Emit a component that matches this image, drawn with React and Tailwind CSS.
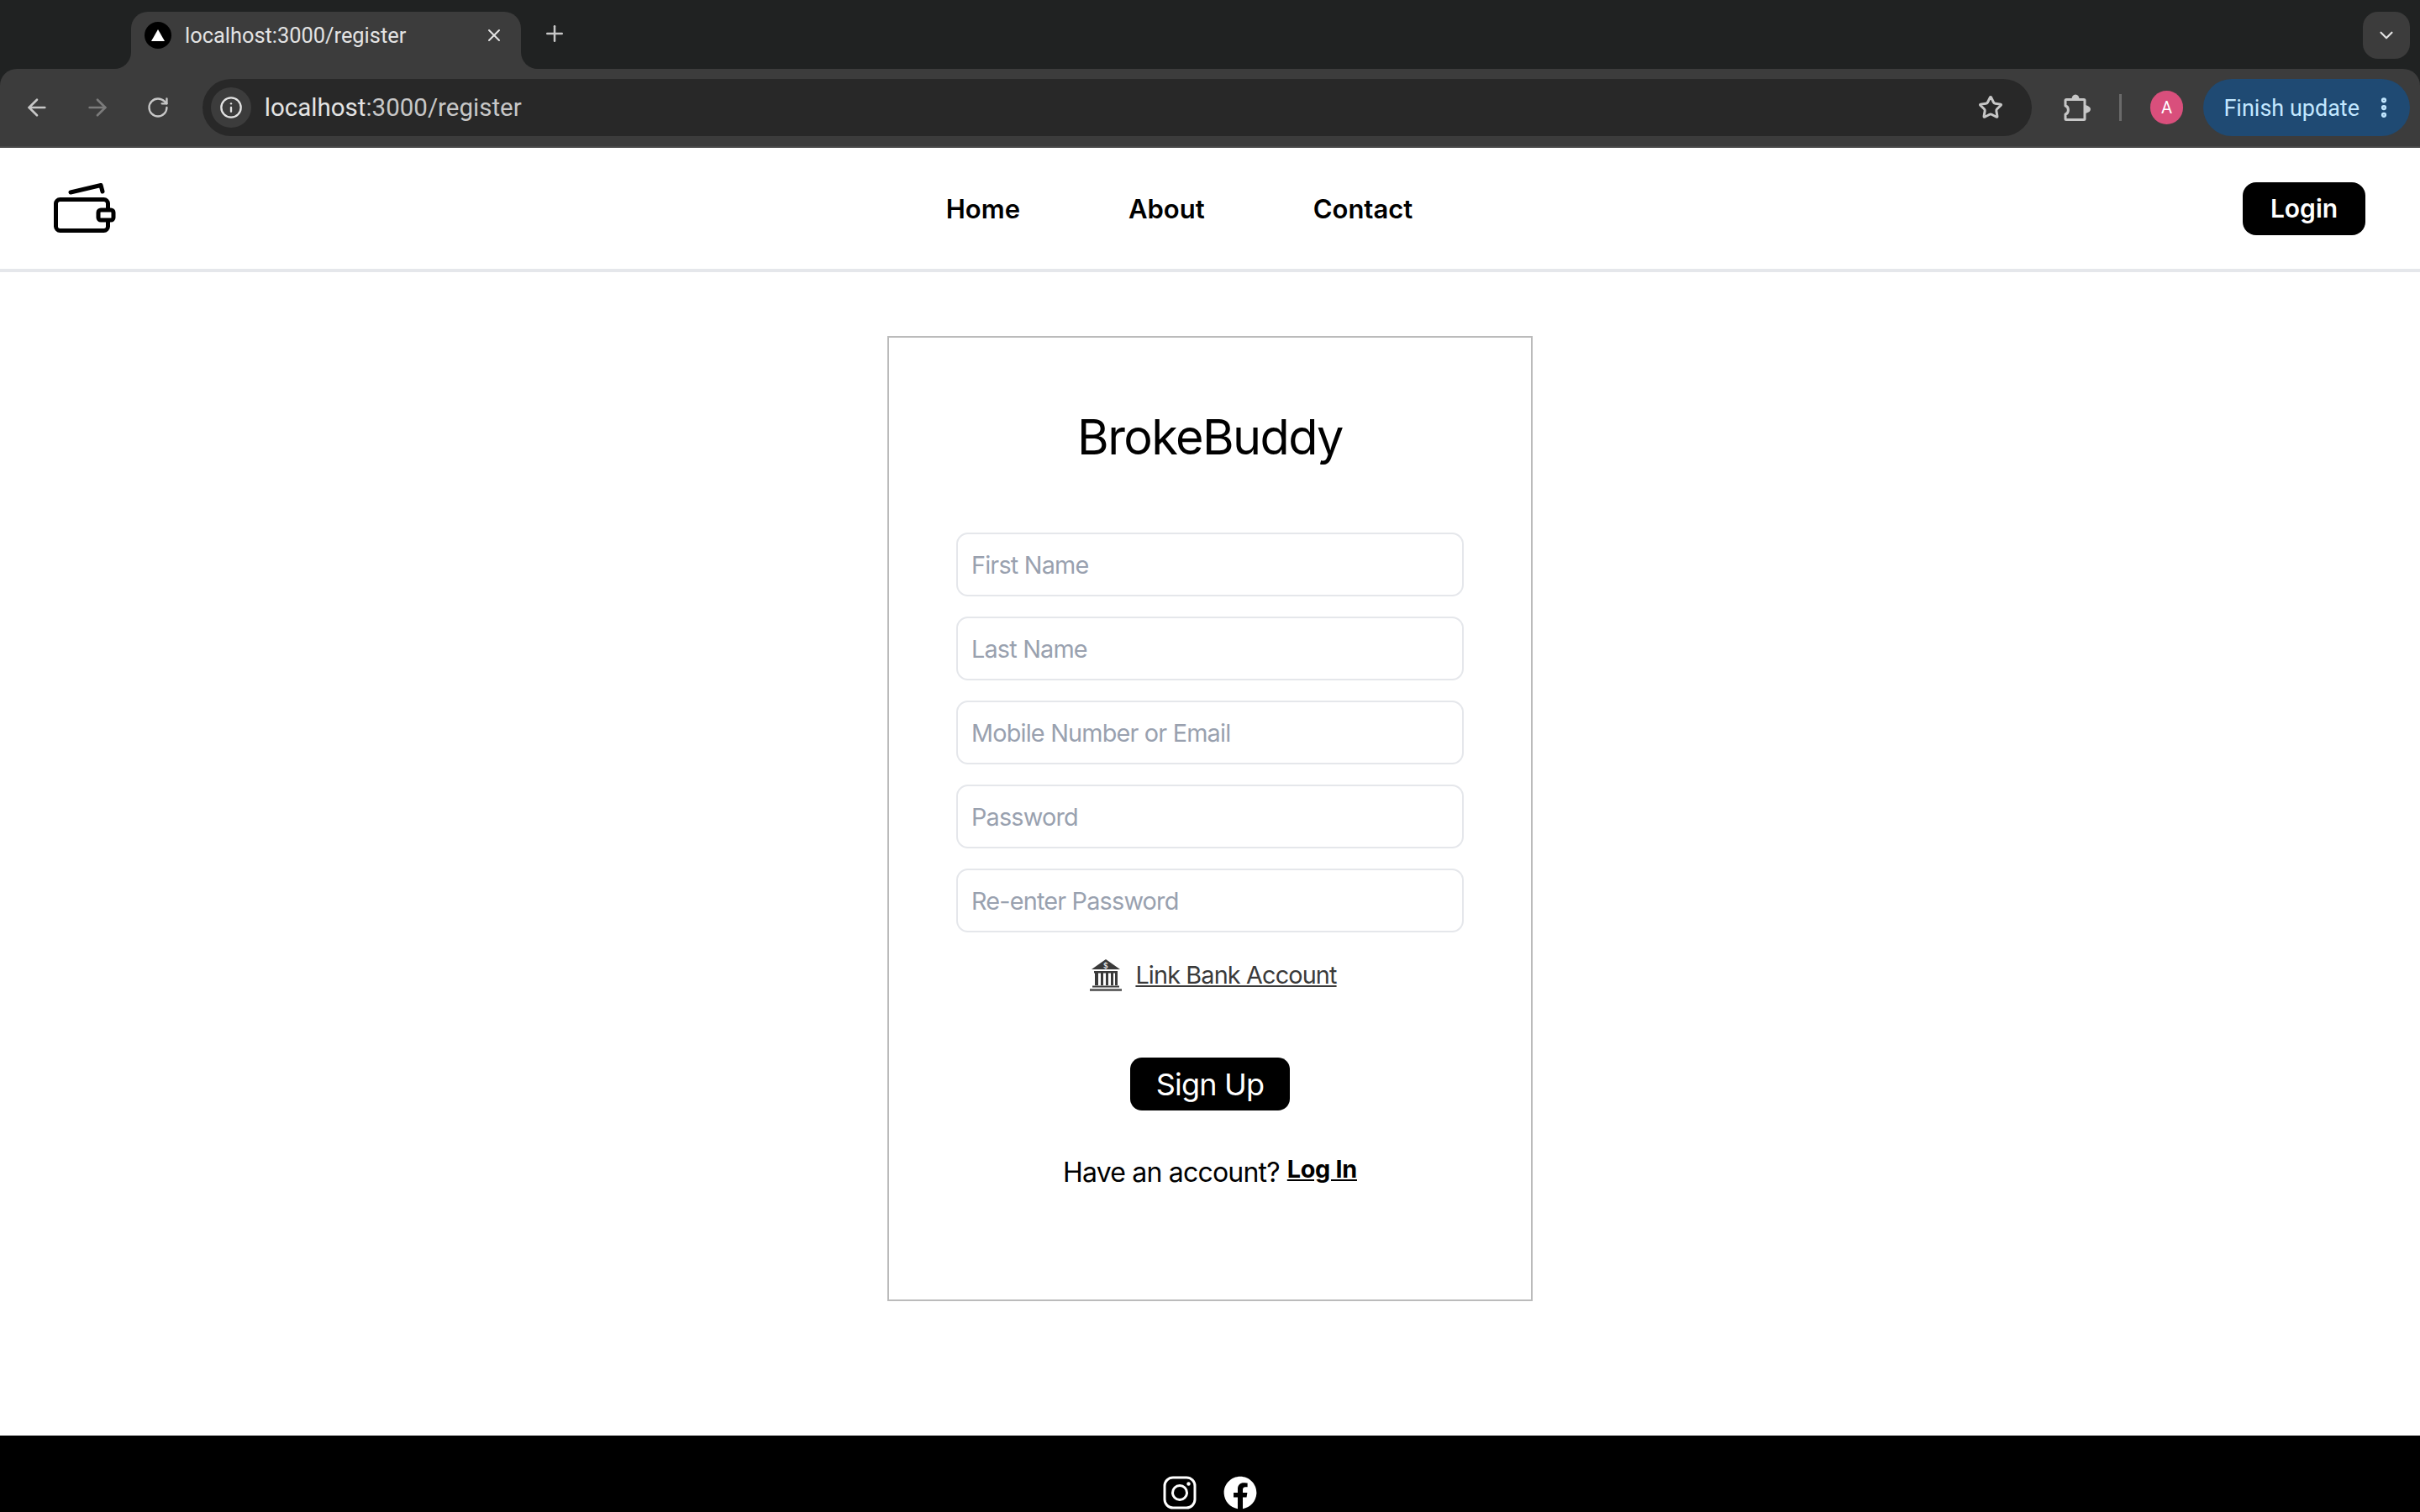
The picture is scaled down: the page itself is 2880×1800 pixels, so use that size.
import { ArrowLeft, ArrowRight, RotateCw, Info, Star, X, Plus, ChevronDown, EllipsisVertical } from 'lucide-react';
import { FaFacebook } from 'react-icons/fa';

const fields = ['First Name', 'Last Name', 'Mobile Number or Email', 'Password', 'Re-enter Password'];

function Wallet() {
    return (
        <svg width="74" height="60" viewBox="0 0 74 60" fill="none" stroke="black" strokeWidth="5" strokeLinecap="round" strokeLinejoin="round">
            <path d="M20 11 L56 2.5 L58 10" />
            <rect x="2.5" y="19.5" width="62" height="37" rx="5" />
            <rect x="53" y="32" width="18" height="12" rx="3" fill="white" />
        </svg>
    );
}

function BankIcon() {
    return (
        <svg width="38" height="40" viewBox="0 0 38 40" fill="#3a3a3a">
            <path d="M19 1 L36 13 H2 Z" />
            <text x="19" y="11.5" fontSize="9" fill="white" textAnchor="middle" fontFamily="Inter">$</text>
            <rect x="5" y="15" width="28" height="2.5" />
            <rect x="6" y="17" width="4" height="15" />
            <rect x="13" y="17" width="3" height="15" />
            <rect x="19" y="17" width="3" height="15" />
            <rect x="25" y="17" width="3" height="15" />
            <rect x="30" y="17" width="3" height="15" />
            <rect x="3" y="32.5" width="32" height="2" />
            <rect x="0" y="36" width="38" height="3" fill="#666" />
        </svg>
    );
}

function Instagram() {
    return (
        <svg width="40" height="40" viewBox="0 0 40 40" fill="none" stroke="white" strokeWidth="3">
            <rect x="2" y="2" width="36" height="36" rx="10" />
            <circle cx="20" cy="20" r="8.5" />
            <circle cx="30.5" cy="9.5" r="2.2" fill="white" stroke="none" />
        </svg>
    );
}

function Puzzle() {
    return (
        <svg width="32" height="32" viewBox="0 0 32 32" fill="#c7c7c7">
            <path d="M3 6.5 H24 a1 1 0 0 1 1 1 V29.5 a1 1 0 0 1-1 1 H3 a1 1 0 0 1-1-1 V24 C6.5 23 6.5 15 2 14 V7.5 a1 1 0 0 1 1-1 Z" fill="none" stroke="#c7c7c7" strokeWidth="3" strokeLinejoin="round" />
            <path d="M9.5 6 a4.5 5.5 0 0 1 9 0 Z" />
            <path d="M26 13 C30 14 32 16 32 18 C32 20 30 22 26 23 Z" />
        </svg>
    );
}

export default function App() {
    return (
        <div className="h-screen overflow-hidden flex flex-col bg-white font-[Inter,sans-serif]">
            {/* browser chrome */}
            <div className="shrink-0 bg-[#202222] font-[Roboto,sans-serif]">
                <div className="h-[82px] flex items-end pl-[156px] pr-[12px]">
                    <div className="relative w-[464px] h-[68px] bg-[#3c3c3c] rounded-t-[20px] flex items-center pl-[16px] pr-[20px] pb-[12px]">
                        {/* concave corners where the tab meets the toolbar */}
                        <div className="absolute -left-[20px] bottom-0 w-[20px] h-[20px] bg-[#3c3c3c]">
                            <div className="w-full h-full bg-[#202222] rounded-br-[20px]" />
                        </div>
                        <div className="absolute -right-[20px] bottom-0 w-[20px] h-[20px] bg-[#3c3c3c]">
                            <div className="w-full h-full bg-[#202222] rounded-bl-[20px]" />
                        </div>
                        <div className="w-[32px] h-[32px] rounded-full bg-black flex items-center justify-center">
                            <div className="w-0 h-0 border-l-[8px] border-r-[8px] border-b-[14px] border-l-transparent border-r-transparent border-b-white" />
                        </div>
                        <span className="ml-[16px] text-[25.4px] text-[#e3e3e3] flex-1">localhost:3000/register</span>
                        <X size={24} color="#e3e3e3" />
                    </div>
                    <div className="self-start mt-[25px] ml-[25px]">
                        <Plus size={30} color="#c7c7c7" />
                    </div>
                    <div className="ml-auto self-start mt-[14px] w-[56px] h-[56px] rounded-[18px] bg-[#3c3c3c] flex items-center justify-center">
                        <ChevronDown size={26} color="#e3e3e3" />
                    </div>
                </div>

                {/* toolbar */}
                <div className="h-[94px] bg-[#3c3c3c] border-b-2 border-[#484848] rounded-t-[20px] flex items-center pl-[28px] pr-[12px]">
                    <ArrowLeft size={32} color="#c7c7c7" />
                    <ArrowRight size={32} color="#7b7b7b" className="ml-[40px]" />
                    <RotateCw size={28} color="#c7c7c7" className="ml-[42px]" />
                    <div className="ml-[39px] w-[2181px] h-[68px] rounded-full bg-[#282828] flex items-center pl-[10px] pr-[34px]">
                        <div className="w-[48px] h-[48px] rounded-full bg-[#3c3c3c] flex items-center justify-center">
                            <Info size={28} color="#e3e3e3" />
                        </div>
                        <span className="ml-[16px] text-[29.5px] text-[#e3e3e3] flex-1">localhost<span className="text-[#c7c7c7]">:3000/register</span></span>
                        <Star size={30} color="#c7c7c7" strokeWidth={2.4} />
                    </div>
                    <div className="ml-[38px]"><Puzzle /></div>
                    <div className="ml-[34px] w-[3px] h-[32px] bg-[#6a6a6a]" />
                    <div className="ml-[34px] w-[40px] h-[40px] rounded-full bg-[#d94f7c] flex items-center justify-center text-white text-[20px]">A</div>
                    <div className="ml-[24px] w-[246px] h-[68px] rounded-full bg-[#1f4a73] flex items-center pl-[24px] pr-[16px] text-[#c2e7ff] text-[27px]">
                        <span className="flex-1 pt-[2px]">Finish update</span>
                        <EllipsisVertical size={30} color="#c2e7ff" strokeWidth={3} />
                    </div>
                </div>
            </div>

            {/* nav */}
            <nav className="h-[148px] shrink-0 border-b-4 border-gray-200 flex items-center justify-between pl-[64px] pr-[65px]">
                <Wallet />
                <div className="flex gap-[129px] pt-[2px] text-[31px] font-semibold text-black">
                    <a>Home</a>
                    <a>About</a>
                    <a>Contact</a>
                </div>
                <button className="w-[146px] h-[63px] rounded-[16px] bg-black text-white text-[30px] font-semibold">Login</button>
            </nav>

            {/* register card */}
            <main className="flex-1 flex flex-col items-center pt-[76px]">
                <div className="w-[768px] h-[1149px] border-2 border-[#bbbbbb] flex flex-col items-center px-[80px] pt-[78px]">
                    <h1 className="text-[57.6px] leading-[80px] text-black tracking-[-1.6px]">BrokeBuddy</h1>
                    <div className="w-full flex flex-col gap-[24px] mt-[74px]">
                        {fields.map((f) => (
                            <input
                                key={f}
                                placeholder={f}
                                className="w-full h-[76px] rounded-[14px] border-2 border-gray-200 px-[16px] text-[28.8px] tracking-[-0.8px] placeholder:text-gray-400 outline-none"
                            />
                        ))}
                    </div>
                    <div className="flex items-center gap-[16px] mt-[31px] ml-[8px]">
                        <BankIcon />
                        <a className="text-[28.8px] text-[#3a3a3a] underline leading-[40px] tracking-[-0.85px]">Link Bank Account</a>
                    </div>
                    <button className="w-[190px] h-[63px] rounded-[14px] bg-black text-white text-[36px] tracking-[-0.8px] mt-[78px]">Sign Up</button>
                    <div className="flex items-start gap-[9px] mt-[52px] text-[32px] text-black">
                        <span className="leading-[44px] tracking-[-0.8px]">Have an account?</span>
                        <a className="font-bold underline text-[28.8px] leading-[36px] tracking-[-0.3px]">Log In</a>
                    </div>
                </div>
            </main>

            {/* footer */}
            <footer className="h-[91px] shrink-0 bg-black flex justify-center items-start gap-[32px] pt-[48px]">
                <Instagram />
                <FaFacebook size={40} color="white" />
            </footer>
        </div>
    );
}
